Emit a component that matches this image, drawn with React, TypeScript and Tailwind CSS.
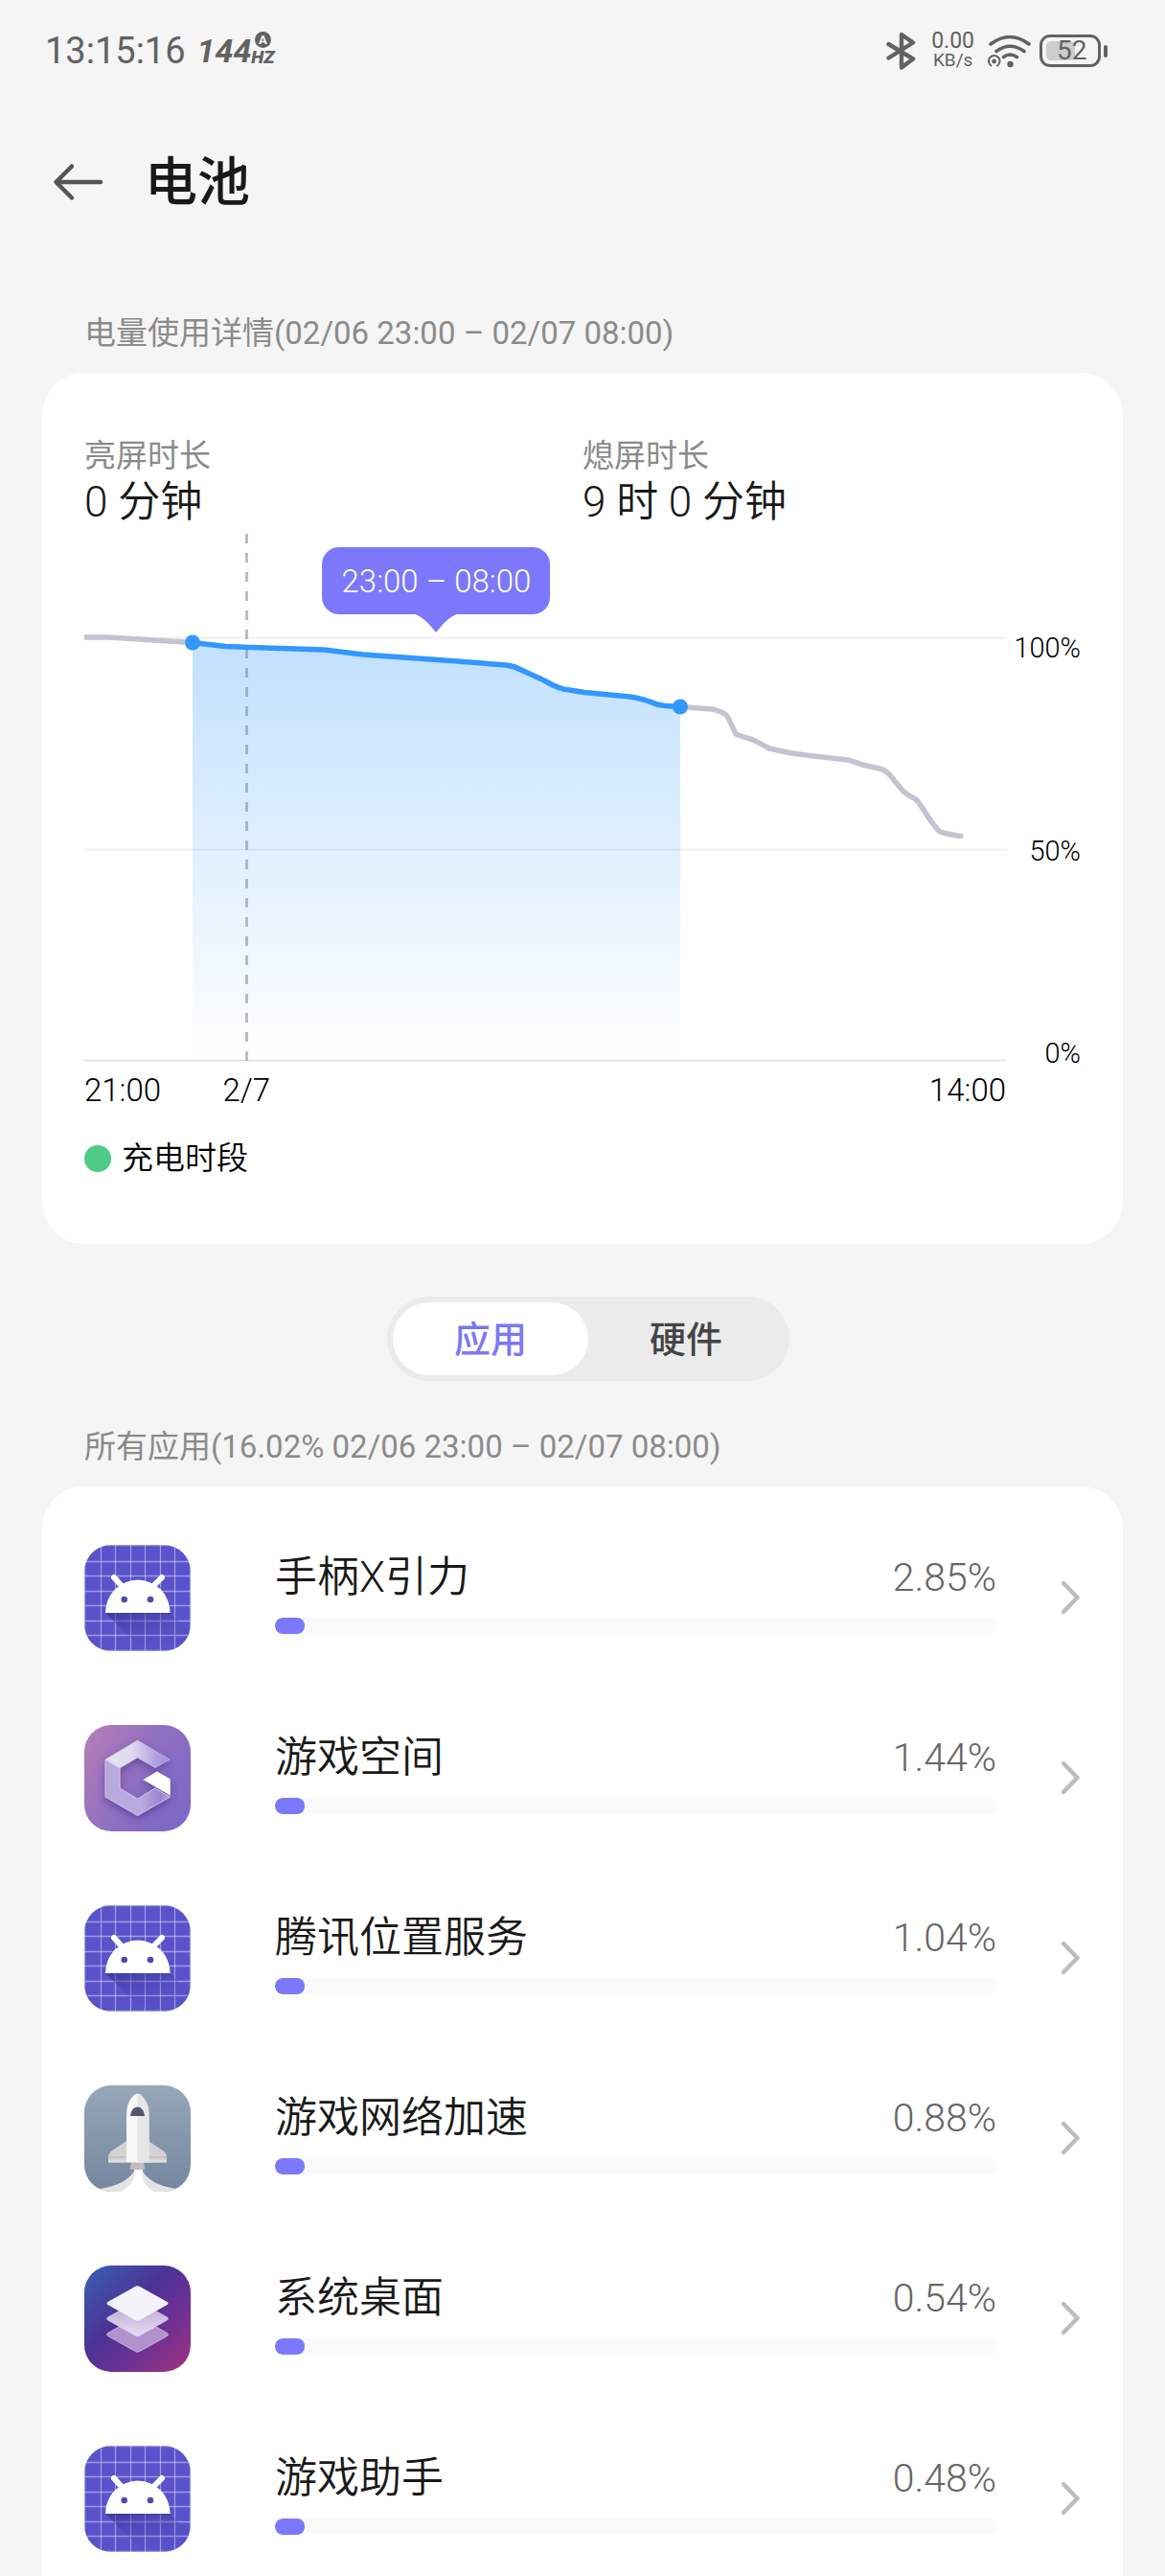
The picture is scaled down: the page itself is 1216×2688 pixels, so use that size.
import { useId, useState } from "react";
import type { ReactNode } from "react";

type App = { name: string; percent: number; icon: ReactNode };

function IconTile({ children }: { children: ReactNode }) {
  return (
    <svg viewBox="0 0 111 111" className="size-[111px] shrink-0 rounded-[28px]" aria-hidden="true">
      {children}
    </svg>
  );
}

function AndroidIcon() {
  const id = useId();
  const lines = [0, 17, 32, 48, 63, 79, 94, 110];
  return (
    <IconTile>
      <defs>
        <linearGradient id={id} x1="0.1" y1="0" x2="0.7" y2="1">
          <stop offset="0" stopColor="#2f2c86" stopOpacity="0.55" />
          <stop offset="0.6" stopColor="#3f3aa0" stopOpacity="0.15" />
          <stop offset="1" stopColor="#3f3aa0" stopOpacity="0" />
        </linearGradient>
      </defs>
      <rect width="111" height="111" fill="#5952cb" />
      <g stroke="#ffffff" strokeOpacity="0.42" strokeWidth="1.3">
        {lines.map((p) => (
          <path key={p} d={`M${p + 0.5} 0V111M0 ${p + 0.5}H111`} />
        ))}
      </g>
      <path d="M22 71L62 111H111V92L89 71Z" fill={`url(#${id})`} />
      <path d="M22 73a34 34.5 0 0 1 68 0z" fill="#3a3597" opacity="0.25" />
      <path d="M31 34L40 44M81 34L71 44" stroke="#fff" strokeWidth="6" strokeLinecap="round" />
      <path d="M22 71a33.8 34.5 0 0 1 67.6 0z" fill="#fff" />
      <circle cx="41.7" cy="57" r="3.3" fill="#4e49b4" />
      <circle cx="69" cy="57" r="3.3" fill="#4e49b4" />
    </IconTile>
  );
}

function GameSpaceIcon() {
  return (
    <IconTile>
      <defs>
        <linearGradient id="gs-bg" x1="0" y1="0.1" x2="1" y2="0.7">
          <stop offset="0" stopColor="#b57db8" />
          <stop offset="0.5" stopColor="#9170c0" />
          <stop offset="1" stopColor="#7c68c6" />
        </linearGradient>
        <linearGradient id="gs-top" x1="0" y1="0" x2="1" y2="0">
          <stop offset="0" stopColor="#e9e4ef" />
          <stop offset="0.42" stopColor="#dedaf0" />
          <stop offset="0.8" stopColor="#afa0e0" />
          <stop offset="1" stopColor="#a08fd8" />
        </linearGradient>
        <linearGradient id="gs-side" x1="0" y1="0" x2="1" y2="0">
          <stop offset="0" stopColor="#b9a8dc" />
          <stop offset="0.55" stopColor="#b9abdf" />
          <stop offset="0.85" stopColor="#9a87d0" />
          <stop offset="1" stopColor="#b5a5e2" />
        </linearGradient>
        <filter id="gs-shadow" x="-20%" y="-20%" width="140%" height="150%">
          <feDropShadow dx="0" dy="4" stdDeviation="4" floodColor="#4a2f8c" floodOpacity="0.6" />
        </filter>
      </defs>
      <rect width="111" height="111" fill="url(#gs-bg)" />
      <g filter="url(#gs-shadow)">
        <path d="M22 36L37 45V66L55.5 77L74 66L89.5 75L55.5 94.5L22 75Z" fill="url(#gs-side)" stroke="#d9cff0" strokeWidth="0.8" />
        <path d="M22 36L55.5 16L89 36L74 44.5L55.5 34L37 45Z" fill="url(#gs-top)" stroke="#cfc6ee" strokeWidth="0.6" />
        <path d="M61.5 57L76 48.5L89.7 56.5V73.5Z" fill="#fff" />
      </g>
    </IconTile>
  );
}

function RocketIcon() {
  return (
    <IconTile>
      <defs>
        <linearGradient id="rk-bg" x1="0" y1="0" x2="0" y2="1">
          <stop offset="0" stopColor="#97a7ba" />
          <stop offset="1" stopColor="#74869f" />
        </linearGradient>
        <clipPath id="rk-half">
          <rect x="55.5" width="30" height="111" />
        </clipPath>
      </defs>
      <rect width="111" height="111" fill="url(#rk-bg)" />
      <path d="M44 58L29 68Q25 71 25 75V80.5H44ZM67 58L82 68Q86 71 86 75V80.5H67Z" fill="#d3d3d3" />
      <path d="M25 75H44M67 75H86" stroke="#b3b3b3" strokeWidth="1" />
      <path d="M25 78H44V80.5H25ZM67 78H86V80.5H67Z" fill="#dedede" />
      <path d="M53 88Q44 104 16 108L8 111H103L96 108Q68 104 60 88Z" fill="#e3e3e3" />
      <path d="M52 88Q54 103 38 111H73Q58 103 61 88Z" fill="#fff" />
      <path d="M49 80H62L63.5 88H47.5Z" fill="#bdbdbd" />
      <path d="M44 80.5V31Q44 18 51 11Q55.5 6.5 60 11Q67.5 18 67.5 31V80.5Z" fill="#f8f8f8" />
      <path d="M44 80.5V31Q44 18 51 11Q55.5 6.5 60 11Q67.5 18 67.5 31V80.5Z" fill="#e6e6e6" clipPath="url(#rk-half)" />
      <path d="M48 32Q49 23 55.5 22.5Q62 23 63 32Z" fill="#55546a" />
    </IconTile>
  );
}

function LayersIcon() {
  const diamond = "M53.5 21.8Q55.5 20.8 57.5 21.8L86.5 38Q88.5 39.5 86.5 41L57.5 57.2Q55.5 58.2 53.5 57.2L24.5 41Q22.5 39.5 24.5 38Z";
  return (
    <IconTile>
      <defs>
        <linearGradient id="ly-bg" x1="0" y1="0" x2="1" y2="1">
          <stop offset="0.04" stopColor="#3a5bb2" />
          <stop offset="0.42" stopColor="#4c3294" />
          <stop offset="0.66" stopColor="#6c3193" />
          <stop offset="1" stopColor="#a23180" />
        </linearGradient>
        <linearGradient id="ly-mid" x1="0" y1="0" x2="0" y2="1">
          <stop offset="0" stopColor="#b7a3d2" />
          <stop offset="1" stopColor="#e6ddf0" />
        </linearGradient>
      </defs>
      <rect width="111" height="111" fill="url(#ly-bg)" />
      <path d={diamond} transform="translate(0 32.5)" fill="#b292cc" stroke="#d8c4e6" strokeWidth="0.8" />
      <path d={diamond} transform="translate(0 16)" fill="url(#ly-mid)" stroke="#e3d8ee" strokeWidth="0.6" />
      <path d={diamond} fill="#f4f2fa" />
    </IconTile>
  );
}

const APPS: App[] = [
  { name: "手柄X引力", percent: 2.85, icon: <AndroidIcon /> },
  { name: "游戏空间", percent: 1.44, icon: <GameSpaceIcon /> },
  { name: "腾讯位置服务", percent: 1.04, icon: <AndroidIcon /> },
  { name: "游戏网络加速", percent: 0.88, icon: <RocketIcon /> },
  { name: "系统桌面", percent: 0.54, icon: <LayersIcon /> },
  { name: "游戏助手", percent: 0.48, icon: <AndroidIcon /> },
];

function StatusBar() {
  return (
    <div className="flex h-[106px] shrink-0 items-center justify-between pr-[60px] pl-[47px] text-[#626262]">
      <div className="flex items-center gap-3">
        <span className="text-[38px] leading-[44px]">13:15:16</span>
        <div className="flex items-center">
          <span className="text-[34px] leading-[44px] font-bold italic">144</span>
          <div className="-mt-1 flex flex-col items-center">
            <span className="flex size-[17px] items-center justify-center rounded-full bg-[#626262] text-[13px] leading-none font-bold text-[#f5f5f5]">
              A
            </span>
            <span className="text-[19px] leading-[20px] font-black italic">HZ</span>
          </div>
        </div>
      </div>
      <div className="flex items-center">
        <svg viewBox="0 0 32 40" className="mr-[16px] h-[40px] w-[32px]" fill="none" stroke="currentColor" strokeWidth="4.4" strokeLinecap="round" strokeLinejoin="round" aria-hidden="true">
          <path d="M3.5 13L29 28.5L17 37.5V3L29 11.5L3.5 27.5" />
        </svg>
        <div className="mr-[13px] flex flex-col items-center">
          <span className="text-[23px] leading-[20px]">0.00</span>
          <span className="text-[19px] leading-[20px]">KB/s</span>
        </div>
        <svg viewBox="0 0 46 36" className="mr-[9px] h-[36px] w-[46px]" fill="none" stroke="currentColor" strokeWidth="3.6" strokeLinecap="round" aria-hidden="true">
          <path d="M4 11Q24 -4 44 11M10 18.5Q24 8 39 18.5M17.5 24.5Q24 19.5 31.5 24.5" />
          <circle cx="24.5" cy="32" r="3.2" fill="currentColor" stroke="none" />
          <path d="M4.5 33.5A5.8 5.8 0 1 1 11 33.5" strokeWidth="2" />
          <circle cx="7.6" cy="29" r="2.4" fill="currentColor" stroke="none" />
        </svg>
        <div className="flex items-center gap-[3px]">
          <div className="flex h-[34px] w-[64px] rounded-[11px] border-[3px] border-current p-[4px]">
            <div className="flex w-[30px] items-center justify-start rounded-[5px] bg-[#cdcdcd] pl-[11px]">
              <span className="text-[28px] leading-none">52</span>
            </div>
          </div>
          <div className="h-[13px] w-[4px] rounded-full bg-current" />
        </div>
      </div>
    </div>
  );
}

function BatteryChart() {
  return (
    <div className="mt-[5px] grid grid-cols-[1fr_78px]">
      <div className="relative">
        <svg viewBox="0 0 962 551" className="block h-auto w-full overflow-visible" role="img" aria-label="电量曲线">
          <defs>
            <linearGradient id="usage" x1="0" y1="0" x2="0" y2="1">
              <stop offset="0" stopColor="#3297ff" stopOpacity="0.3" />
              <stop offset="1" stopColor="#3297ff" stopOpacity="0" />
            </linearGradient>
          </defs>
          <path d="M0 109.5H962M0 330.5H962" stroke="#ededed" strokeWidth="1.5" />
          <path d="M0 550.5H962" stroke="#dddddd" strokeWidth="1.5" />
          <path d="M169.5 1V551" stroke="#bdbdbd" strokeWidth="3" strokeDasharray="10 10" />
          <path
            d="M113 115L147 118.5L250 122L291 127L369 132.5L440 138Q449 139 456 143L480 154Q492 161 500 163L522 166.5L569 171Q582 173 590 176Q598 180 606 180.5L622 181.5V551H113Z"
            fill="url(#usage)"
          />
          <g fill="none" strokeWidth="5.5" strokeLinejoin="round" strokeLinecap="round">
            <path d="M0 109H25L113 114.5" stroke="#c3c4d2" strokeLinecap="butt" />
            <path
              d="M622 181.5L655 184Q665 186 670 190Q673 194 680 210Q688 213 698 216Q706 220 715 225Q735 230 757 232.5L797 237Q804 239 812 242L830 246Q837 248 841 253L855 270Q860 274 868 278Q872 282 881 297L890 309Q892 312 897 313Q904 315 915 316.5"
              stroke="#c3c4d2"
            />
            <path
              d="M113 114.5L147 118.5L250 122L291 127L369 132.5L440 138Q449 139 456 143L480 154Q492 161 500 163L522 166.5L569 171Q582 173 590 176Q598 180 606 180.5L622 181.5"
              stroke="#3297ff"
            />
          </g>
          <circle cx="113" cy="114.5" r="8" fill="#3297ff" />
          <circle cx="622" cy="181.5" r="8" fill="#3297ff" />
        </svg>
        <div className="absolute top-[15px] left-[38.2%] flex -translate-x-1/2 flex-col items-center">
          <span className="rounded-[18px] bg-[#7b78fb] px-[20px] pt-[2px] text-[33px] leading-[68px] font-[350] whitespace-nowrap text-white">
            23:00 – 08:00
          </span>
          <svg viewBox="0 0 56 20" className="-mt-px h-[20px] w-[56px]" aria-hidden="true">
            <path d="M0 0H56Q48 0 41 6Q35 11 28 20Q21 11 15 6Q8 0 0 0Z" fill="#7b78fb" />
          </svg>
        </div>
      </div>
      <div className="-mb-2 flex flex-col items-end justify-between pt-[104px] text-[29px] leading-[32px] font-[350] text-black">
        <span>100%</span>
        <span>50%</span>
        <span>0%</span>
      </div>
      <div className="relative mt-[10px] flex justify-between text-[33px] leading-[42px] font-[350] text-black">
        <span>21:00</span>
        <span className="absolute left-[17.6%] -translate-x-1/2">2/7</span>
        <span>14:00</span>
      </div>
    </div>
  );
}

function AppRow({ app }: { app: App }) {
  return (
    <li>
      <a href="#app" className="flex items-start pt-[39px] pb-[38px]">
        {app.icon}
        <div className="mr-[68px] ml-[88px] min-w-0 flex-1">
          <div className="flex items-center justify-between pt-1 leading-[60px]">
            <span className="text-[44px] font-[350] text-[#191919]">{app.name}</span>
            <span className="text-[41px] font-[350] text-[#666666]">{app.percent.toFixed(2)}%</span>
          </div>
          <div className="mt-[12px] h-[17px] overflow-hidden rounded-[8px] bg-[#fafafa]">
            <div className="h-full min-w-[31px] rounded-[8px] bg-[#7b78fb]" style={{ width: `${app.percent}%` }} />
          </div>
        </div>
        <svg viewBox="0 0 20 36" className="h-[36px] w-[20px] shrink-0 self-center" fill="none" stroke="#bdbdbd" strokeWidth="4.5" strokeLinecap="round" strokeLinejoin="round" aria-hidden="true">
          <path d="M2 2L16.5 17L2 32" />
        </svg>
      </a>
    </li>
  );
}

const TABS = ["应用", "硬件"];

export default function App() {
  const [tab, setTab] = useState("应用");
  return (
    <div className="flex h-screen flex-col bg-[#f5f5f5] font-[Roboto,'Noto_Sans_CJK_SC',sans-serif]">
      <StatusBar />
      <main className="min-h-0 flex-1 overflow-y-auto px-11 [scrollbar-width:none]">
        <header className="flex h-[168px] items-center pl-[11px]">
          <button type="button" aria-label="返回" className="text-[#555555]">
            <svg viewBox="0 0 54 40" className="h-[40px] w-[54px]" fill="none" stroke="currentColor" strokeWidth="4.5" strokeLinecap="round" strokeLinejoin="round" aria-hidden="true">
              <path d="M50 20H3.5M20 3.5L3.5 20L20 36.5" />
            </svg>
          </button>
          <h1 className="ml-[42px] text-[55px] leading-[70px] font-medium text-[#191919]">电池</h1>
        </header>

        <h2 className="mt-[50px] mb-[17px] pl-11 text-[33px] leading-[48px] text-[#8b8b8b]">
          电量使用详情(02/06 23:00 – 02/07 08:00)
        </h2>
        <section className="rounded-[44px] bg-white px-11 pt-[66px] pb-[68px]">
          <dl className="grid grid-cols-2">
            <div>
              <dt className="text-[33px] leading-[42px] text-[#8b8b8b]">亮屏时长</dt>
              <dd className="text-[44px] leading-[54px] font-[350] text-[#191919]">0 分钟</dd>
            </div>
            <div>
              <dt className="text-[33px] leading-[42px] text-[#8b8b8b]">熄屏时长</dt>
              <dd className="text-[44px] leading-[54px] font-[350] text-[#191919]">9 时 0 分钟</dd>
            </div>
          </dl>
          <BatteryChart />
          <div className="mt-[29px] flex items-center gap-[11px] text-[33px] leading-[42px] font-[350] text-black">
            <span className="size-[28px] rounded-full bg-[#4dcb85]" />
            充电时段
          </div>
        </section>

        <div className="flex justify-center pt-[55px] pl-[12px]">
          <div role="tablist" className="flex h-[88px] w-[420px] rounded-full bg-[#ebebeb] p-[6px]">
            {TABS.map((label) => (
              <button
                key={label}
                type="button"
                role="tab"
                aria-selected={tab === label}
                onClick={() => setTab(label)}
                className={
                  tab === label
                    ? "flex-1 rounded-full bg-white pt-[2px] text-[38px] font-medium text-[#7b78f0]"
                    : "flex-1 rounded-full pt-[2px] text-[38px] font-medium text-[#444444]"
                }
              >
                {label}
              </button>
            ))}
          </div>
        </div>

        <h2 className="mt-[45px] mb-[17px] pl-11 text-[33px] leading-[48px] text-[#8b8b8b]">
          所有应用(16.02% 02/06 23:00 – 02/07 08:00)
        </h2>
        <ul className="rounded-[44px] bg-white px-11 pt-[22px] pb-11">
          {APPS.map((app) => (
            <AppRow key={app.name} app={app} />
          ))}
        </ul>
      </main>
    </div>
  );
}
